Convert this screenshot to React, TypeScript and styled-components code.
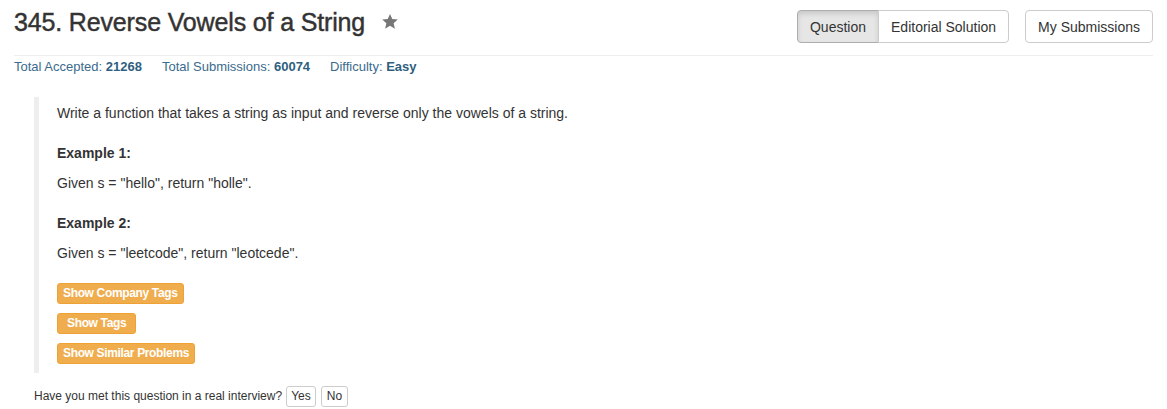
import React from "react";
import styled, { createGlobalStyle } from "styled-components";

const Global = createGlobalStyle`
  html, body { margin: 0; padding: 0; background: #fff; }
  body {
    font-family: "Liberation Sans", Arial, Helvetica, sans-serif;
    font-size: 14px;
    line-height: 1.42857;
    color: #333;
  }
`;

const Page = styled.div`
  width: 1167px;
  padding: 0 14px;
  box-sizing: border-box;
`;

const Header = styled.div`
  display: flex;
  align-items: flex-start;
  justify-content: space-between;
  padding-top: 10px;
  padding-bottom: 12px;
  border-bottom: 1px solid #eee;
`;

const Title = styled.h3`
  margin: -3px 0 0;
  font-size: 25px;
  font-weight: 500;
  line-height: 30px;
  letter-spacing: -0.15px;
  color: #333;
  -webkit-text-stroke: 0.45px #333;
  display: flex;
  align-items: center;
  gap: 16px;
`;

const Star = styled.svg`
  width: 18px;
  height: 17px;
  margin-top: -1px;
`;

const Actions = styled.div`
  display: flex;
  gap: 16px;
`;

const Group = styled.div`
  display: flex;
`;

const Btn = styled.button<{ $active?: boolean; $pos?: "left" | "right" | "single" }>`
  font-family: inherit;
  font-size: 14px;
  line-height: 20px;
  height: 33px;
  padding: 6px 12px;
  color: #333;
  background: ${(p) => (p.$active ? "#e6e6e6" : "#fff")};
  border: 1px solid ${(p) => (p.$active ? "#adadad" : "#ccc")};
  box-shadow: ${(p) => (p.$active ? "inset 0 3px 5px rgba(0,0,0,.125)" : "none")};
  border-radius: ${(p) =>
    p.$pos === "left" ? "4px 0 0 4px" : p.$pos === "right" ? "0 4px 4px 0" : "4px"};
  margin-left: ${(p) => (p.$pos === "right" ? "-1px" : "0")};
  cursor: pointer;
`;

const Stats = styled.div`
  display: flex;
  gap: 20px;
  font-size: 13px;
  line-height: 18px;
  padding-top: 2px;
  color: #3a6b8e;
`;

const Stat = styled.span`
  b { font-weight: bold; color: #2f5f80; }
`;

const Quote = styled.blockquote`
  margin: 21px 0 0 20px;
  padding: 6px 20px 9px 18px;
  border-left: 5px solid #eee;
`;

const P = styled.p`
  margin: 0 0 10px;
  line-height: 20px;
`;

const Bold = styled.p`
  margin: 0 0 10px;
  padding-top: 10px;
  font-weight: bold;
  line-height: 20px;
`;

const Tags = styled.div`
  display: flex;
  flex-direction: column;
  align-items: flex-start;
  gap: 9px;
  padding-top: 10px;
`;

const TagBtn = styled.button<{ $wide?: boolean }>`
  font-family: inherit;
  font-size: 12px;
  font-weight: bold;
  line-height: 15px;
  letter-spacing: -0.35px;
  color: #fff;
  background: #f0ad4e;
  border: 1px solid #eea236;
  border-radius: 3px;
  padding: 2px ${(p) => (p.$wide ? "9px" : "5px")};
  height: 21px;
`;

const Interview = styled.div`
  display: flex;
  align-items: center;
  margin: 13px 0 0 20px;
  font-size: 12px;
`;

const SmallBtn = styled.button`
  font-family: inherit;
  font-size: 12px;
  line-height: 15px;
  color: #333;
  background: #fff;
  border: 1px solid #ccc;
  border-radius: 3px;
  padding: 2px 5px;
  height: 21px;
  margin-left: 4px;
  & + & { margin-left: 5px; }
  &:first-of-type { padding: 2px 4px; }
`;

export default function App() {
  return (
    <>
      <Global />
      <Page>
        <Header>
          <Title>
            345. Reverse Vowels of a String
            <Star viewBox="0 0 24 24">
              <path
                d="M12 1.5l3.2 7.1 7.8.7-5.9 5.2 1.8 7.6L12 18.1 5.1 22.1l1.8-7.6L1 9.3l7.8-.7z"
                fill="#777"
              />
            </Star>
          </Title>
          <Actions>
            <Group>
              <Btn $active $pos="left">Question</Btn>
              <Btn $pos="right">Editorial Solution</Btn>
            </Group>
            <Btn $pos="single">My Submissions</Btn>
          </Actions>
        </Header>
        <Stats>
          <Stat>
            Total Accepted: <b>21268</b>
          </Stat>
          <Stat>
            Total Submissions: <b>60074</b>
          </Stat>
          <Stat>
            Difficulty: <b>Easy</b>
          </Stat>
        </Stats>
        <Quote>
          <P>Write a function that takes a string as input and reverse only the vowels of a string.</P>
          <Bold>Example 1:</Bold>
          <P>Given s = "hello", return "holle".</P>
          <Bold>Example 2:</Bold>
          <P>Given s = "leetcode", return "leotcede".</P>
          <Tags>
            <TagBtn>Show Company Tags</TagBtn>
            <TagBtn $wide>Show Tags</TagBtn>
            <TagBtn>Show Similar Problems</TagBtn>
          </Tags>
        </Quote>
        <Interview>
          Have you met this question in a real interview?
          <SmallBtn>Yes</SmallBtn>
          <SmallBtn>No</SmallBtn>
        </Interview>
      </Page>
    </>
  );
}
